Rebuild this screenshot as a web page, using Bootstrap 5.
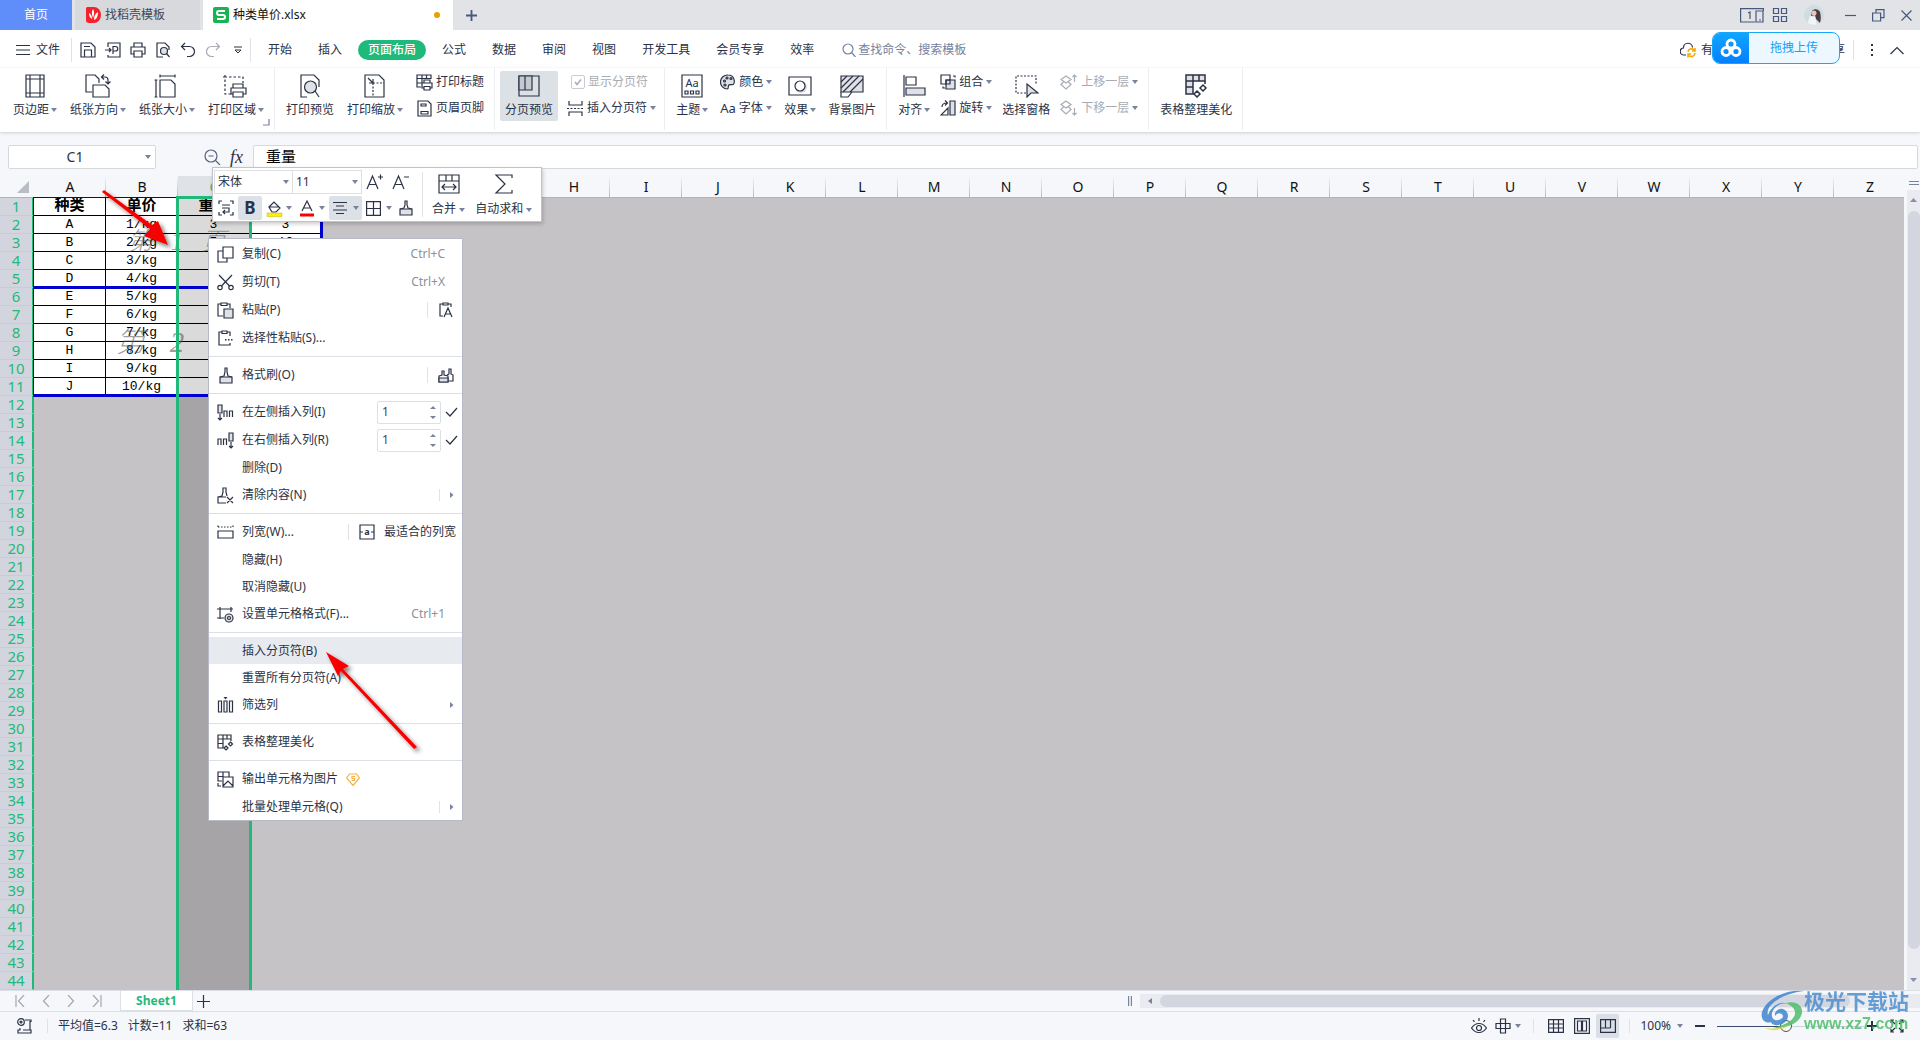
<!DOCTYPE html>
<html lang="zh-CN">
<head>
<meta charset="utf-8">
<meta name="viewport" content="width=device-width, initial-scale=1">
<title>种类单价.xlsx</title>
<link rel="stylesheet" href="https://cdn.jsdelivr.net/npm/bootstrap@5.3.0/dist/css/bootstrap.min.css">
<style>
:root{--ink:#2b3245;--green:#1fba7a;--line:#dfe2e6;--pale:#f5f7fa}
body{font:12px/16px "Noto Sans","Noto Sans CJK SC",sans-serif;color:var(--ink);background:var(--pale);height:100vh;overflow:hidden}
button,input,select{font:inherit;color:inherit;background:none;border:0;padding:0;margin:0;border-radius:0}
button{white-space:nowrap}
svg{fill:none;stroke:currentColor;stroke-width:1.2;flex:none;display:block}
.soft{fill:#dfe1e6}
.dot{fill:currentColor;stroke:none}
.caret-dn{width:0;height:0;border:3px solid transparent;border-top:4px solid #78839d;border-bottom:0;flex:none;display:inline-block}
.vline{width:1px;background:var(--line);flex:none}
.titlebar{height:30px;background:#e1e3e7}
.tab-home{width:72px;background:#5f8df9;color:#fff}
.tab-find{width:125px;margin-left:3px;padding-left:11px;background:#d8d9dc;color:#3f4656}
.tab-file{width:250px;margin-left:3px;padding:0 13px 0 10px;background:#fff;color:#111}
.tab-new{margin-left:12px}
.mod-dot{width:6px;height:6px;border-radius:50%;background:#e8a000}
.win{color:#48587c}
.avatar{border-radius:50%;overflow:hidden}
.menubar{height:38px;background:#fff;padding-top:2px}
.filesep{margin:0 3px}
.quick button{width:25px;height:24px;display:flex;align-items:center;justify-content:center}
.mtabs{gap:6px;padding-left:7px}
.mtabs button{padding:0 10px;height:20px;border-radius:10px}
.mtabs .on{background:var(--green);color:#fff;font-weight:500}
.search{color:#7481a0;padding-left:18px;gap:2px}
.search input{width:130px}
.search input::placeholder{color:#7481a0;opacity:1}
.ribbon{height:64px;background:#fff;box-shadow:0 1px 3px rgba(0,0,0,.16);position:relative;z-index:1}
.rgroup{padding:3px 10px 0 11px;gap:12px;border-right:1px solid #eceef0;height:62px;position:relative}
.rgroup.wide{gap:13px}
.rgroup.near{gap:10px}
.rgroup.first{padding-left:13px}
.rgroup.tight{padding-left:5px;padding-right:8px;gap:9px}
.rb{height:50px;padding:3px 0;display:flex;flex-direction:column;align-items:center;gap:4px}
.rb svg{height:24px;width:26px}
.rb span.lb{display:flex;align-items:center;gap:2px}
.rb.on{width:58px;background:#dce1e6;border-radius:2px}
.rcol{padding-top:1px;gap:6px}
.rs{height:20px;gap:3px;display:flex;align-items:center}
.off{color:#a7abb3}
.tick{width:14px;height:14px;border:1px solid #c9ccd2;border-radius:2px;appearance:none;-webkit-appearance:none;background:url("data:image/svg+xml,%3Csvg xmlns='http://www.w3.org/2000/svg' viewBox='0 0 12 12'%3E%3Cpath d='M3 6l2 2.500 4-5' fill='none' stroke='%23a7abb3' stroke-width='1.500'/%3E%3C/svg%3E")}
.corner{position:absolute;right:4px;bottom:4px;color:#78839d}
.fbar{height:44px;padding:13px 2px 7px 8px}
.box{background:#fff;border:1px solid #d5d8dd;border-radius:2px;height:24px}
.namebox{width:148px}
.namebox input{width:100%;text-align:center;padding-right:4px;font-size:14px}
.fzoom{margin-right:9px;color:#56627e}
.fx{font:italic 18px/20px "Liberation Serif",serif;margin-right:10px}
.fcell{font-size:15px;color:#000;padding:0 12px 4px;width:calc(100% - 245px)}
.sheet{min-height:0;background:#c5c3c6}
.gridwrap{overflow:hidden;position:relative;min-width:0}
.cells{border-collapse:separate;border-spacing:0;table-layout:fixed;width:1906px}
.cells th,.cells td{padding:0;height:18px;text-align:center;white-space:nowrap}
.cells thead th{height:22px;line-height:21px;font-size:14px;font-weight:400;color:#111;background:linear-gradient(#f5f7fa,#b0b8cc) right/1px 100% no-repeat #f5f7fa;border-bottom:1px solid #aab3c8}
.cells thead th.cur{background-color:#dfe2e7;color:var(--green)}
.cells thead th:first-child{background:#f5f7fa;width:34px}
.cells thead th:first-child svg{margin-left:17px}
.cells tbody th{background:#d2d5dd;color:var(--green);font-weight:400;font-size:15px;line-height:17px;border-right:2px solid var(--green);border-bottom:1px solid #c9ccd6}
.cells td{font:13px/17px "Liberation Mono","Noto Sans CJK SC",monospace;color:#000}
.cells td.in{background:#fff;border-right:1px solid #000;border-bottom:1px solid #000}
.cells td.hd{font-size:15px;font-weight:700;line-height:17px}
.cells td.sel{background:#a6a4a7}
.cells td.in.sel{background:#dadada}
.page{position:absolute;left:33px;width:290px;border:3px solid #0000d0;border-width:1px 3px 3px 1px;display:flex;align-items:center;justify-content:center;color:rgba(90,90,90,.6);font:italic 300 25px/26px "Liberation Serif","Noto Sans CJK SC",serif;gap:18px}
.page.one{top:21px;height:92px}
.page.two{top:113px;height:108px;border-top:0;font-size:29px;gap:25px}
.colsel{position:absolute;left:176px;top:20px;bottom:-4px;width:76px;border:3px solid var(--green)}
.vscroll{width:16px;background:#e9ebf1;border-left:3px solid var(--pale)}
.vscroll .thumb{width:12px;flex:1;background:#d3d6df;border-radius:6px;margin-bottom:27px}
.tabsrow{height:22px;border-top:1px solid #dcdfe6;border-bottom:1px solid #dcdfe6;background:var(--pale)}
.navs{width:120px;padding:0 18px 0 15px;color:#a3a7ae}
.stab{width:73px;background:#fff;color:var(--green);font-weight:700;border:1px solid #dcdfe6;border-width:0 1px 1px}
.hthumb{height:12px;background:#d3d6df;border-radius:6px;width:690px}
.htrack{width:780px;height:14px;background:#e9ebf1;color:#78839d}
.status{height:28px;padding:0 16px 0 17px}
.sums{gap:10px}
.viewon{background:#d9dfe5;border-radius:2px;width:23px;height:24px}
.zoomer{width:147px;height:14px;appearance:none;-webkit-appearance:none}
.zoomer::-webkit-slider-runnable-track{height:1px;background:linear-gradient(90deg,#3c4c6e 47%,#cdd2de 47%)}
.zoomer::-webkit-slider-thumb{-webkit-appearance:none;width:12px;height:12px;margin-top:-6px;border:1px solid #555;border-radius:50%;background:#f5f7fa}
.floatbar{position:absolute;left:212px;top:167px;width:330px;height:55px;background:#fff;border:1px solid #bfc3cc;box-shadow:1px 2px 4px rgba(0,0,0,.2);z-index:3}
.floatbar .pick{border:1px solid #dcdfe4;height:24px;display:flex;align-items:center;padding:0 3px 0 3px}
.floatbar select{appearance:none;-webkit-appearance:none;flex:1;outline:0}
.frow{height:26px;display:flex;align-items:center}
.hot{background:#dce1e8;height:24px;border-radius:2px;display:flex;align-items:center;justify-content:center}
.ctx{position:absolute;left:208px;top:238px;width:255px;background:#fff;border:1px solid #b5bac6;padding:1px 0 0;z-index:3}
.ctx .it{display:flex;align-items:center;width:100%;height:28px;padding:0 8px;text-align:left}
.ctx .it.plain{height:27px;padding-left:33px}
.ctx .it.over{background:#e7ebf0}
.ctx .it svg.ico{width:17px;height:17px;margin-right:8px}
.ctx .div-line{height:1px;background:#dcdfe6;margin:4px 0}
.key{color:#8b9099;padding-right:9px}
.spin{width:64px;height:23px;border:1px solid #dcdfe4;border-radius:2px;display:flex;align-items:center;padding:0 4px}
.spin input{width:40px;flex:1;color:#3c4656}
.more{border-left:1px solid var(--line);height:12px;display:flex;align-items:center;padding-left:10px}
.more .dot{fill:#78839d}
.more.tall{height:16px}
.more.bare{border-color:transparent}
.fit{margin-right:-2px;gap:9px}
.drop{position:absolute;left:1712px;top:32px;width:128px;height:32px;border:1px solid #16a7fb;border-radius:8px;overflow:hidden;background:#ecf7ff;color:#12a0fb;z-index:4}
.drop .pad{width:36px;background:linear-gradient(#12a5ff,#0080ff);color:#fff}
.marks{position:absolute;left:0;top:0;z-index:5;pointer-events:none;stroke:none}
.brand{position:absolute;right:11px;bottom:8px;z-index:6;opacity:.85;pointer-events:none}
.brand svg{stroke:none}
.brand b{display:block;font-size:21px;line-height:24px;padding-bottom:2px;color:#4d8fd0}
.brand i{display:block;font:bold 16px/17px "Liberation Sans",sans-serif;color:#4fbf6c}
</style>
<script src="https://cdn.jsdelivr.net/npm/bootstrap@5.3.0/dist/js/bootstrap.bundle.min.js"></script>
</head>
<body class="d-flex flex-column">

<header class="titlebar d-flex align-items-stretch">
  <button class="tab-home">首页</button>
  <button class="tab-find d-flex align-items-center gap-1">
    <svg width="15" height="16" viewBox="0 0 15 16"><path fill="#f5222d" stroke="none" d="M1 0h7a7 8 0 0 1 0 16H3a3 3 0 0 1-3-3V1z"/><path fill="#fff" stroke="none" d="M7 2c2 3 1 6 0 9-1-3-2-6 0-9zM3 6c2 1 3 3 3 6-2-1-3-3-3-6zM12 5c-3 2-4 4-4 8 3-1 4-4 4-8z"/></svg>
    找稻壳模板</button>
  <button class="tab-file d-flex align-items-center gap-1">
    <svg width="16" height="16" viewBox="0 0 16 16"><rect width="16" height="16" rx="2" fill="#17b551" stroke="none"/><path d="M12 4H6a2 2 0 0 0 0 4h4a2 2 0 0 1 0 4H4" stroke="#fff" stroke-width="2"/></svg>
    种类单价.xlsx<span class="mod-dot ms-auto"></span></button>
  <button class="win tab-new" aria-label="新建"><svg width="13" height="13" viewBox="0 0 13 13"><path d="M6.500 1v11M1 6.500h11" stroke-width="1.800"/></svg></button>
  <div class="win ms-auto d-flex align-items-center pe-2">
    <svg width="24" height="15" viewBox="0 0 24 15"><path d="M15 14H.6V.6h22.800V3M16 3h7v11h-7zM19 12h2M8 5l2-1v7"/></svg>
    <svg width="16" height="16" viewBox="0 0 16 16" class="mx-2 ms-2 me-3"><path d="M1.500 1.500h5v5h-5zM9.500 1.500h5v5h-5zM1.500 9.500h5v5h-5zM9.500 9.500h5v5h-5z"/></svg>
    <svg class="avatar" width="20" height="20" viewBox="0 0 20 20"><g stroke="none"><rect width="20" height="20" fill="#cfdde3"/><path fill="#4b3b3c" d="M8 6c2-3 7-2 8 1 1 4 1 7 0 11l-4-4-1-4-4 1z"/><circle cx="10" cy="8" r="2.500" fill="#e8c6b8"/><path fill="#f1f5f7" d="M6 11l5 1 2 8H3z"/></g></svg>
    <span class="vline ms-2 me-2" style="height:20px"></span>
    <svg class="ms-1" width="11" height="11" viewBox="0 0 11 11"><path d="M0 5.500h11"/></svg>
    <svg class="ms-3" width="13" height="13" viewBox="0 0 13 13"><path d="M.6 4h8v8h-8zM4 4V.6h8v8H8.600"/></svg>
    <svg class="ms-3" width="11" height="11" viewBox="0 0 11 11"><path d="M.5.5l10 10M10.500.5l-10 10"/></svg>
  </div>
</header>

<nav class="menubar d-flex align-items-center">
  <button class="d-flex align-items-center ps-3 pe-2" style="gap:6px"><svg width="14" height="12" viewBox="0 0 14 12"><path d="M0 1.500h14M0 6h14M0 10.500h14"/></svg>文件</button>
  <span class="vline filesep" style="height:24px"></span>
  <div class="quick d-flex">
    <button aria-label="保存"><svg width="16" height="16" viewBox="0 0 16 16"><path d="M1 1h10l4 4v10H1zM4.500 15V8h7v7M4 4.500h6"/></svg></button>
    <button aria-label="输出"><svg width="16" height="16" viewBox="0 0 16 16"><path d="M3 5V1h12v14H3v-2M0 8h6M4 6l2 2-2 2M8 12V4.500h2.500a2 2 0 0 1 0 4.500H8"/></svg></button>
    <button aria-label="打印"><svg width="16" height="16" viewBox="0 0 16 16"><path d="M4 5V1h8v4M4 12H1V5h14v7h-3M4 9h8v6H4z"/></svg></button>
    <button aria-label="打印预览"><svg width="16" height="16" viewBox="0 0 16 16"><path d="M8 15H2V1h8l4 4v3"/><circle cx="9" cy="9" r="3.500" class="soft"/><path d="M11.500 11.500l3 3.500"/></svg></button>
    <button aria-label="撤销"><svg width="16" height="16" viewBox="0 0 16 16"><path d="M5 1L1.500 4.500 5 8M2 4.500h7.500a5 5 0 0 1 0 10H7"/></svg></button>
    <button class="off" aria-label="恢复"><svg width="16" height="16" viewBox="0 0 16 16"><path d="M11 1l3.500 3.500L11 8M14 4.500H6.500a5 5 0 0 0 0 10H9"/></svg></button>
    <button aria-label="更多"><svg width="8" height="8" viewBox="0 0 8 8"><path d="M0 1h8M1 4h6L4 7z" stroke-width="1"/></svg></button>
  </div>
  <span class="vline" style="height:24px"></span>
  <div class="mtabs d-flex">
    <button>开始</button><button>插入</button><button class="on">页面布局</button><button>公式</button><button>数据</button><button>审阅</button><button>视图</button><button>开发工具</button><button>会员专享</button><button>效率</button>
  </div>
  <label class="search d-flex align-items-center"><svg width="14" height="14" viewBox="0 0 14 14"><circle cx="6" cy="6" r="5"/><path d="M9.500 9.500L13.500 14"/></svg><input type="text" placeholder="查找命令、搜索模板" aria-label="查找"></label>
  <div class="ms-auto d-flex align-items-center pe-3">
    <svg width="17" height="16" viewBox="0 0 17 16" class="me-1"><path d="M6 13H4a3.500 3.500 0 0 1-.5-7 4.500 4.500 0 0 1 9-.5"/><path stroke="#f5a800" stroke-width="1.600" d="M8 10a3.500 3.500 0 0 1 6-2M15 6v3h-3M15 11a3.500 3.500 0 0 1-6 2.500M8 15.500V12h3"/></svg>
    <span>有修改</span><span class="px-3 me-1">协作</span><span class="ps-4 me-1">分享</span>
    <span class="vline ms-1" style="height:20px"></span>
    <svg class="ms-3" width="4" height="14" viewBox="0 0 4 14"><path class="dot" d="M1 1h2v2H1zM1 6h2v2H1zM1 11h2v2H1z"/></svg>
    <svg class="ms-3" width="14" height="9" viewBox="0 0 14 9"><path d="M.5 8L7 1.500 13.500 8"/></svg>
  </div>
</nav>

<section class="ribbon d-flex">
  <div class="rgroup wide first d-flex">
    <button class="rb"><svg viewBox="0 0 26 24"><path d="M4 1h18v22H4zM8 1v22M18 1v22M4 5h18M4 19h18"/></svg><span class="lb">页边距<i class="caret-dn"></i></span></button>
    <button class="rb"><svg viewBox="0 0 26 24"><path d="M7 18H1V1h9l4 4v4M8 11h12l4 4v8H8zM17 3h3a3 3 0 0 1 3 3v4M19 .5L16.500 3 19 5.500M20.500 7.500L23 10l2.500-2.500"/></svg><span class="lb">纸张方向<i class="caret-dn"></i></span></button>
    <button class="rb"><svg viewBox="0 0 26 24"><path d="M6 6h11l4 4v13H6zM6 2h15M6 .5v3M21 .5v3M2 6v17M.5 6h3M.5 23h3"/></svg><span class="lb">纸张大小<i class="caret-dn"></i></span></button>
    <button class="rb"><svg viewBox="0 0 26 24"><path stroke-dasharray="2.500 2" d="M8 20H2V3h18v6M0 3h3M2 1v3"/><path d="M10 14v-4h10v4M10 20H8v-6h15v6h-3M10 18h10v5H10z"/></svg><span class="lb">打印区域<i class="caret-dn"></i></span></button>
    <svg class="corner" width="7" height="7" viewBox="0 0 7 7"><path d="M6 0v6H0"/></svg>
  </div>
  <div class="rgroup wide d-flex">
    <button class="rb"><svg viewBox="0 0 26 24"><path d="M10 23H4V1h13l5 5v7"/><circle cx="13.500" cy="13" r="6" class="soft"/><path d="M18 17l4 6"/></svg><span class="lb">打印预览</span></button>
    <button class="rb"><svg viewBox="0 0 26 24"><path d="M3 1h14l5 5v17H3zM6 4l5 5M11 5v4H7"/><path stroke-dasharray="2 1.500" d="M11 9v14M11 9h11"/></svg><span class="lb">打印缩放<i class="caret-dn"></i></span></button>
    <div class="rcol d-flex flex-column">
      <button class="rs"><svg width="17" height="17" viewBox="0 0 17 17"><path d="M5 13H1V1h14v4M1 4.500h14M1 9h5M6 1v8M10.500 1v4M8 9V6h6v3M8 14H6V9h10v5h-2M8 12.500h6v3.500H8z"/></svg>打印标题</button>
      <button class="rs"><svg width="17" height="17" viewBox="0 0 17 17"><path d="M2 1h10l3 3v12H2zM5 4h5v2H5zM5 11.500h7V14H5z"/></svg>页眉页脚</button>
    </div>
  </div>
  <div class="rgroup tight d-flex">
    <button class="rb on"><svg viewBox="0 0 26 24"><path d="M3 2h20v20H3z"/><path style="fill:#c5c9d2" d="M3 2h6v14H3zM9 2h7v14H9z"/></svg><span class="lb">分页预览</span></button>
    <div class="rcol d-flex flex-column">
      <label class="rs off ps-1"><input type="checkbox" class="tick" checked disabled>显示分页符</label>
      <button class="rs"><svg width="17" height="17" viewBox="0 0 17 17"><path d="M2 1v4h13V1M2 16v-4h13v4"/><path stroke-dasharray="2 1.500" d="M0 8.500h17"/></svg>插入分页符<i class="caret-dn"></i></button>
    </div>
  </div>
  <div class="rgroup d-flex">
    <button class="rb"><svg viewBox="0 0 26 24"><path d="M3 1h20v22H3z"/><path d="M6 17h3v3H6zM11.500 17h3v3h-3zM17 17h3v3h-3z"/><text x="13" y="13" font-size="11" text-anchor="middle" fill="currentColor" stroke="none">Aa</text></svg><span class="lb">主题<i class="caret-dn"></i></span></button>
    <div class="rcol d-flex flex-column">
      <button class="rs"><svg width="16" height="16" viewBox="0 0 16 16"><path class="soft" d="M8 1a7 7 0 1 0-1 14c2 0 1-2 1.500-3.500C9 10 11 11 13 10.500S15.500 1 8 1z"/><circle cx="4.500" cy="7" r="1"/><circle cx="7" cy="4" r="1"/><circle cx="11" cy="4.500" r="1"/><circle cx="5" cy="11" r="1"/></svg>颜色<i class="caret-dn"></i></button>
      <button class="rs"><span style="font-size:13px">Aa</span>字体<i class="caret-dn"></i></button>
    </div>
    <button class="rb"><svg viewBox="0 0 26 24"><path d="M2 3h22v18H2z"/><circle cx="14" cy="13" r="6" fill="#d5d7dc" stroke="none"/><circle cx="13" cy="12" r="5" fill="#fff"/></svg><span class="lb">效果<i class="caret-dn"></i></span></button>
    <button class="rb"><svg viewBox="0 0 26 24"><path class="soft" d="M2 2h22v16H2z"/><path d="M2 14L14 2M4 18L20 2M11 18L24 5M2 8l6-6M2 18v5h7l4-5"/></svg><span class="lb">背景图片</span></button>
  </div>
  <div class="rgroup near d-flex">
    <button class="rb"><svg viewBox="0 0 26 24"><path d="M3 1v22M5 3h10v8H5z"/><path class="soft" d="M5 14h19v7H5z"/></svg><span class="lb">对齐<i class="caret-dn"></i></span></button>
    <div class="rcol d-flex flex-column">
      <button class="rs"><svg width="16" height="16" viewBox="0 0 16 16"><path d="M1 1h9v9H1z"/><path class="soft" d="M6 6h9v9H6z"/><path d="M6 6h4v4H6zM13 2h2v1.500M3 12.500V14h2"/></svg>组合<i class="caret-dn"></i></button>
      <button class="rs"><svg width="16" height="16" viewBox="0 0 16 16"><path class="soft" d="M10 1h5v14h-5z"/><path d="M8 8v7H1zM2 7c0-3 2-4 5-4M5 .5L7.500 3 5 5.500"/></svg>旋转<i class="caret-dn"></i></button>
    </div>
    <button class="rb"><svg viewBox="0 0 26 24"><path stroke-dasharray="2 1.500" d="M13 19H3V2h20v9"/><path class="soft" d="M14 10v13l4-4h7z"/></svg><span class="lb">选择窗格</span></button>
    <div class="rcol d-flex flex-column off">
      <button class="rs"><svg width="18" height="16" viewBox="0 0 18 16"><path d="M6 2l5 3.500L6 9 1 5.500zM3.500 8L1 10.500 6 15l5-4.500L8.500 8M14.500 8V1M12.500 3l2-2 2 2"/></svg>上移一层<i class="caret-dn"></i></button>
      <button class="rs"><svg width="18" height="16" viewBox="0 0 18 16"><path d="M6 1l5 3.500L6 8 1 4.500zM3.500 7L1 9.500 6 14l5-4.500L8.500 7M14.500 8v7M12.500 13l2 2 2-2"/></svg>下移一层<i class="caret-dn"></i></button>
    </div>
  </div>
  <div class="rgroup d-flex">
    <button class="rb"><svg viewBox="0 0 26 24" style="stroke-width:1.5"><path class="soft" d="M3 1h19v6H3zM3 7h7v13H3z"/><path d="M10 1v6M16 1v6M3 13h7M22 7v3M20 11l3 3-3 3-3-3zM14 17l3 3-3 3-3-3z"/></svg><span class="lb">表格整理美化</span></button>
  </div>
</section>

<section class="fbar d-flex align-items-center">
  <div class="box namebox d-flex align-items-center pe-1"><input type="text" value="C1" aria-label="名称框"><i class="caret-dn"></i></div>
  <svg class="ms-auto fzoom" width="17" height="16" viewBox="0 0 17 16"><circle cx="7" cy="7" r="6"/><path d="M11.500 11.500L16 16M4.500 7h5"/></svg>
  <span class="fx">fx</span>
  <input class="box fcell" type="text" value="重量" aria-label="编辑栏">
</section>

<main class="sheet d-flex flex-grow-1">
  <div class="gridwrap flex-grow-1">
    <table class="cells" id="cells"><thead><tr></tr></thead><tbody></tbody></table>
    <div class="page one"><span>第</span><span>1</span><span>页</span></div>
    <div class="page two"><span>第</span><span>2</span><span>页</span></div>
    <div class="colsel"></div>
  </div>
  <div class="vscroll d-flex flex-column align-items-center">
    <div class="w-100 text-center" style="background:var(--pale);height:14px;padding:5px 2px"><svg width="10" height="4" viewBox="0 0 10 4"><path d="M0 .5h10M0 3.500h10" stroke="#78839d"/></svg></div>
    <svg width="7" height="21" viewBox="0 0 7 21"><path fill="#8590ac" stroke="none" d="M0 12l3.500-4L7 12z"/></svg>
    <div class="thumb"></div>
    <svg width="7" height="14" viewBox="0 0 7 14"><path fill="#8590ac" stroke="none" d="M0 2l3.500 4L7 2z"/></svg>
  </div>
</main>

<div class="tabsrow d-flex align-items-center">
  <div class="navs d-flex justify-content-between">
    <svg width="10" height="12" viewBox="0 0 10 12"><path d="M1 0v12M9 0L3.500 6 9 12"/></svg>
    <svg width="8" height="12" viewBox="0 0 8 12"><path d="M7 0L1.500 6 7 12"/></svg>
    <svg width="8" height="12" viewBox="0 0 8 12"><path d="M1 0l5.500 6L1 12"/></svg>
    <svg width="10" height="12" viewBox="0 0 10 12"><path d="M9 0v12M1 0l5.500 6L1 12"/></svg>
  </div>
  <button class="stab align-self-stretch">Sheet1</button>
  <button class="ps-1" aria-label="新建工作表"><svg width="13" height="13" viewBox="0 0 13 13"><path d="M6.500 0v13M0 6.500h13"/></svg></button>
  <svg class="ms-auto me-2" width="4" height="10" viewBox="0 0 4 10"><path d="M.6 0v10M3.400 0v10" stroke="#78839d"/></svg>
  <div class="htrack d-flex align-items-center"><svg class="mx-2" width="4" height="6" viewBox="0 0 4 6"><path class="dot" d="M4 0v6L0 3z"/></svg><div class="hthumb"></div></div>
</div>

<footer class="status d-flex align-items-center">
  <svg width="16" height="16" viewBox="0 0 16 16"><circle cx="4" cy="4" r="3.300"/><circle cx="4" cy="4" r="1"/><path d="M8 2h6v2M13 3v9M3 10v2H1v3h13v-3H6"/></svg>
  <span class="vline" style="height:14px;margin:0 10px 0 14px"></span>
  <div class="d-flex sums"><span>平均值=6.3</span><span>计数=11</span><span>求和=63</span></div>
  <div class="ms-auto d-flex align-items-center">
    <svg width="16" height="16" viewBox="0 0 16 16"><path d="M.5 10c4-6 11-6 15 0-4 6-11 6-15 0zM8 0v3M2 2l1.500 2M14 2l-1.500 2"/><circle cx="8" cy="10" r="2.500"/></svg>
    <svg class="ms-2" width="16" height="16" viewBox="0 0 16 16"><path d="M5.500 1h5v14h-5zM1 5.500h14v5H1z"/></svg><i class="caret-dn ms-1"></i>
    <span class="vline" style="height:14px;margin:0 14px 0 12px"></span>
    <svg width="16" height="14" viewBox="0 0 16 14"><path d="M.6.6h14.800v12.800H.6zM.6 5h14.800M.6 9h14.800M5.500.6v12.800M10.500.6v12.800"/></svg>
    <svg width="16" height="16" viewBox="0 0 16 16" style="margin:0 6px 0 10px"><path d="M.6.6h14.800v14.800H.6zM3.500 3h4v10h-4zM8.500 3h4v10h-4z"/></svg>
    <button class="viewon d-flex align-items-center justify-content-center" aria-label="分页预览"><svg width="16" height="14" viewBox="0 0 16 14"><path d="M.6.6h14.800v12.800H.6zM5.500.6V9M10.500.6V9M.6 9h9.900"/></svg></button>
    <span class="vline" style="height:14px;margin:0 10px"></span>
    <span>100%</span><i class="caret-dn" style="margin:0 12px 0 6px"></i>
    <svg width="10" height="10" viewBox="0 0 10 10"><path d="M0 5h10" stroke-width="2"/></svg>
    <input class="zoomer" type="range" min="0" max="100" value="47" aria-label="缩放" style="margin:0 3px 0 12px">
    <svg width="10" height="10" viewBox="0 0 10 10"><path d="M0 5h10M5 0v10" stroke-width="2"/></svg>
    <svg width="14" height="14" viewBox="0 0 14 14" style="margin-left:13px"><path d="M1 4V1h3M1 1l4 4M10 1h3v3M13 1L9 5M1 10v3h3M1 13l4-4M13 10v3h-3M13 13L9 9"/></svg>
  </div>
</footer>

<div class="drop d-flex">
  <span class="pad d-flex align-items-center justify-content-center"><svg width="22" height="20" viewBox="0 0 22 20"><circle cx="11" cy="6" r="4" stroke-width="2.800"/><circle cx="6" cy="13.500" r="4" stroke-width="2.800"/><circle cx="16" cy="13.500" r="4" stroke-width="2.800"/></svg></span>
  <button class="flex-grow-1">拖拽上传</button>
</div>

<div class="floatbar d-flex">
  <div class="flex-shrink-0" style="width:209px;padding:1px">
    <div class="frow">
      <div class="pick" style="width:79px"><select aria-label="字体"><option>宋体</option></select><i class="caret-dn"></i></div>
      <div class="pick border-start-0" style="width:69px"><select aria-label="字号"><option>11</option></select><i class="caret-dn"></i></div>
      <svg class="ms-1" width="18" height="18" viewBox="0 0 18 18"><path d="M1 16L6.500 3 12 16M3 11.500h7M12 4h5M14.500 1.500v5"/></svg>
      <svg class="ms-2" width="18" height="18" viewBox="0 0 18 18"><path d="M1 16L6.500 3 12 16M3 11.500h7M12 4h5"/></svg>
    </div>
    <div class="frow">
      <svg width="16" height="16" viewBox="0 0 16 16" style="margin:0 4px"><path d="M1 4V1h3M12 1h3v3M1 12v3h3M12 15h3v-3M4 5h8M4 8h7v4H5M7 10l-2 2 2 2"/></svg>
      <button class="hot fw-bold" style="width:24px;font-size:17px">B</button>
      <svg width="17" height="17" viewBox="0 0 17 17" style="margin:0 3px 0 4px"><path d="M3 7l5-5 6 6-4 4H6zM3 7h10"/><rect x="1" y="13" width="15" height="3.500" fill="#ffee00" stroke="#c9b800" stroke-width=".5"/></svg><i class="caret-dn"></i>
      <svg width="16" height="17" viewBox="0 0 16 17" style="margin:0 4px 0 7px"><path d="M3 11L8 1l5 10M5 8h6"/><path stroke="#f00" stroke-width="3" d="M1 15h14"/></svg><i class="caret-dn"></i>
      <button class="hot" style="width:33px;margin-left:4px;gap:6px" aria-label="对齐"><svg width="14" height="14" viewBox="0 0 14 14"><path d="M0 1.500h14M3 5h8M0 9h14M3 12.500h8"/></svg><i class="caret-dn"></i></button>
      <svg width="15" height="15" viewBox="0 0 15 15" style="margin:0 5px 0 4px"><path d="M.6.6h13.800v13.800H.6zM7.500.6v13.800M.6 7.500h13.800"/></svg><i class="caret-dn"></i>
      <svg width="14" height="16" viewBox="0 0 14 16" style="margin-left:7px"><path class="soft" d="M1 9h12v6H1z"/><path d="M1 9l4-1 1-3V1h2v4l1 3 4 1"/></svg>
    </div>
  </div>
  <span class="vline my-1"></span>
  <button class="d-flex flex-column align-items-center" style="padding:5px 0 0 9px;gap:6px"><svg width="22" height="22" viewBox="0 0 22 22"><path d="M1 2h20v18H1zM1 8h20M8 2v6M14 2v6M4 14h14M7 11l-3 3 3 3M15 11l3 3-3 3"/></svg><span>合并 <i class="caret-dn align-middle"></i></span></button>
  <button class="d-flex flex-column align-items-center" style="padding:5px 0 0 10px;gap:6px"><svg width="20" height="22" viewBox="0 0 20 22"><path d="M18 5V2H2l9 9-9 9h16v-3"/></svg><span>自动求和 <i class="caret-dn align-middle"></i></span></button>
</div>

<div class="ctx">
  <button class="it"><svg class="ico" viewBox="0 0 17 17"><path d="M6 1h10v11H6zM6 5H1v11h9v-4"/></svg>复制(C)<span class="key ms-auto">Ctrl+C</span></button>
  <button class="it"><svg class="ico" viewBox="0 0 17 17"><path d="M2 1l10.500 11M15 1L4.500 12"/><circle cx="3" cy="13.500" r="2.200"/><circle cx="14" cy="13.500" r="2.200"/></svg>剪切(T)<span class="key ms-auto">Ctrl+X</span></button>
  <button class="it"><svg class="ico" viewBox="0 0 17 17"><path d="M6 14H1V2h3M10 2h3v4M4 1h6v2.500H4z"/><path class="soft" d="M7 7h9v9H7z"/></svg>粘贴(P)<span class="more tall ms-auto"><svg width="16" height="16" viewBox="0 0 16 16"><path d="M5 14H2V2h3M10 2h3v3M5 1h5v2H5zM6 15l4-9 4 9M7.500 12h5"/></svg></span></button>
  <button class="it"><svg class="ico" viewBox="0 0 17 17"><path d="M13 13v2H2V2h3M10 2h3v4M5 1h5v2.500H5z"/><path class="dot" d="M8 9h1.500v1.500H8zM11 9h1.500v1.500H11zM14 9h1.500v1.500H14z"/></svg>选择性粘贴(S)...</button>
  <div class="div-line"></div>
  <button class="it"><svg class="ico" viewBox="0 0 17 17"><path class="soft" d="M3 10h12v6H3z"/><path d="M3 10l4-1 1-4V1h2v4l1 4 4 1"/></svg>格式刷(O)<span class="more tall ms-auto"><svg width="16" height="16" viewBox="0 0 16 16"><path d="M9 8l2-1V2h2v5l2 1v6h-4M1 9l3-1V4h2v4l4 1v6H1z"/><path class="soft" d="M1 11h9v4H1z"/></svg></span></button>
  <div class="div-line"></div>
  <div class="it pe-1"><svg class="ico" viewBox="0 0 17 17"><path class="soft" d="M1 1h4v8H1z"/><path d="M3 10v6M1 14l2 2 2-2M7 13V7h3v6M12.500 13V7h3v6"/></svg><label for="insl">在左侧插入列(I)</label><span class="spin ms-auto me-1"><input id="insl" type="text" value="1"><svg width="6" height="15" viewBox="0 0 6 15"><path fill="#78839d" stroke="none" d="M0 4l3-3 3 3zM0 11l3 3 3-3z"/></svg></span><svg width="13" height="10" viewBox="0 0 13 10"><path d="M1 5l4 4 7-8"/></svg></div>
  <div class="it pe-1"><svg class="ico" viewBox="0 0 17 17"><path class="soft" d="M12 1h4v8h-4z"/><path d="M14 10v6M12 14l2 2 2-2M1 13V7h3v6M6.500 13V7h3v6"/></svg><label for="insr">在右侧插入列(R)</label><span class="spin ms-auto me-1"><input id="insr" type="text" value="1"><svg width="6" height="15" viewBox="0 0 6 15"><path fill="#78839d" stroke="none" d="M0 4l3-3 3 3zM0 11l3 3 3-3z"/></svg></span><svg width="13" height="10" viewBox="0 0 13 10"><path d="M1 5l4 4 7-8"/></svg></div>
  <button class="it plain">删除(D)</button>
  <button class="it"><svg class="ico" viewBox="0 0 17 17"><path d="M9 16H1v-6l4-1 1-4V1h3v4l1 4M1 10h8M10 10l6 6M16 10l-6 6"/></svg>清除内容(N)<span class="more ms-auto"><svg width="4" height="6" viewBox="0 0 4 6"><path class="dot" d="M0 0v6l3.500-3z"/></svg></span></button>
  <div class="div-line"></div>
  <div class="it"><svg class="ico" viewBox="0 0 17 17"><path d="M1 7h15v7H1z"/><path stroke-dasharray="1.500 1.500" d="M1 3h15M1 1.500v3M16 1.500v3"/></svg><button>列宽(W)...</button><button class="more tall fit ms-auto"><svg width="16" height="16" viewBox="0 0 16 16"><path d="M1 1h14v14H1zM1 8h3M12 8h3"/><text x="8" y="11" font-size="9" font-weight="700" text-anchor="middle" fill="currentColor" stroke="none">a</text></svg>最适合的列宽</button></div>
  <button class="it plain">隐藏(H)</button>
  <button class="it plain">取消隐藏(U)</button>
  <button class="it"><svg class="ico" viewBox="0 0 17 17"><path d="M0 3h16M3 1v12M14 1v5M0 12h7"/><circle cx="12" cy="12" r="4" class="soft"/><circle cx="12" cy="12" r="1.500"/></svg>设置单元格格式(F)...<span class="key ms-auto">Ctrl+1</span></button>
  <div class="div-line"></div>
  <button class="it plain over">插入分页符(B)</button>
  <button class="it plain">重置所有分页符(A)</button>
  <button class="it"><svg class="ico" viewBox="0 0 17 17"><path d="M1.500 4h3v11h-3zM7 4h3v11H7zM12.500 4h3v11h-3z"/><path class="dot" d="M6.500 0h4l-2 2.500z"/></svg>筛选列<span class="more bare ms-auto"><svg width="4" height="6" viewBox="0 0 4 6"><path class="dot" d="M0 0v6l3.500-3z"/></svg></span></button>
  <div class="div-line"></div>
  <button class="it"><svg class="ico" viewBox="0 0 17 17"><path d="M1 1h13v4H1zM1 5h5v9H1zM6 1v4M10 1v4M1 9.500h5M14 5v2M13.500 8l2 2-2 2-2-2zM9 12l2 2-2 2-2-2z"/></svg>表格整理美化</button>
  <div class="div-line"></div>
  <button class="it"><svg class="ico" viewBox="0 0 17 17"><path d="M5 10H1V1h11v5M1 5.500h5M6 1v5M6 6h10v10H6zM6 15l5-5 5 5M1 12v3h3"/></svg>输出单元格为图片<svg class="ms-2" width="14" height="13" viewBox="0 0 14 13" style="color:#f5b04c"><path d="M3.500 1h7l3 4L7 12.500.5 5zM9 3.500H6v2h2.500v2H5.500"/></svg></button>
  <button class="it plain">批量处理单元格(Q)<span class="more ms-auto"><svg width="4" height="6" viewBox="0 0 4 6"><path class="dot" d="M0 0v6l3.500-3z"/></svg></span></button>
</div>

<svg class="marks" width="480" height="780" viewBox="0 0 480 780">
  <defs><filter id="sh" x="-20%" y="-20%" width="150%" height="150%"><feDropShadow dx="3" dy="3" stdDeviation="2" flood-opacity=".5"/></filter></defs>
  <g filter="url(#sh)" fill="#f80000">
    <path d="M102 192L104 190 152 225 158 221 168 245 144 236 150 229z"/>
    <path d="M417 747l-3 2-73-78-3 5-12-24 23 14-6 3z"/>
  </g>
</svg>

<div class="brand d-flex align-items-center">
  <svg width="44" height="42" viewBox="0 0 44 42"><path fill="#3f86cf" d="M44 1C24-1 6 10 2 22c-2 8 4 12 9 10 1 4 8 4 13 1 5-4 6-11-1-14-5-1-9 3-8 7 3-4 7-3 8 0 0 3-5 5-8 4-5-2-4-10 2-14 4-3 9-3 11-1C24 10 12 14 8 25 5 16 20 4 44 1z"/><path fill="#4fbf6c" d="M26 13c12-3 19 5 15 13-4 9-17 13-28 12 13-3 23-9 22-16-1-5-5-7-9-9z"/><path fill="#d9d94a" d="M5 38c8 1 18 0 25-3-7 5-18 7-25 3z"/></svg>
  <div><b>极光下载站</b><i>www.xz7.com</i></div>
</div>

<script>
// first rows of the sheet; every row below them is empty
const rows = [['种类','单价','重量','总价'],['A','1/kg','3','3'],['B','2/kg','5','10'],['C','3/kg','6','18'],['D','4/kg','7','28'],['E','5/kg','8','40'],['F','6/kg','9','54'],['G','7/kg','5','35'],['H','8/kg','6','48'],['I','9/kg','7','63'],['J','10/kg','7','70']];
const table = document.getElementById('cells');
let head = '<th><svg width="12" height="12" viewBox="0 0 12 12"><path d="M12 0v12H0z" fill="#b9bdc6" stroke="none"/></svg></th>';
for (let c = 0; c < 26; c++) head += `<th class="${c === 2 ? 'cur' : ''}">${String.fromCharCode(65 + c)}</th>`;
table.tHead.rows[0].innerHTML = head;
let body = '';
for (let r = 0; r < 44; r++) {
  body += `<tr><th>${r + 1}</th>`;
  for (let c = 0; c < 26; c++) {
    const v = rows[r] && rows[r][c];
    body += `<td class="${v ? 'in ' : ''}${r === 0 ? 'hd ' : ''}${c === 2 ? 'sel' : ''}">${v || ''}</td>`;
  }
  body += '</tr>';
}
table.tBodies[0].innerHTML = body;
</script>
</body>
</html>
